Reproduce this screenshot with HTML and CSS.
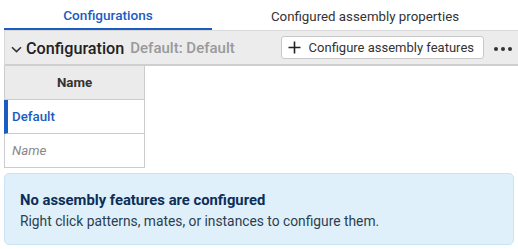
FILE: index.html
```html
<!DOCTYPE html>
<html>
<head>
<meta charset="utf-8">
<link rel="stylesheet" href="styles.css">
</head>
<body>
<div class="page">
  <div class="tabs">
    <div class="tab active">Configurations</div>
    <div class="tab other">Configured assembly properties</div>
  </div>
  <div class="header">
    <svg class="chev" width="11" height="7" viewBox="0 0 11 7"><path d="M1 1.2 L5.5 5.6 L10 1.2" fill="none" stroke="#333" stroke-width="1.6"/></svg>
    <span class="title">Configuration</span>
    <span class="sub">Default: Default</span>
    <span class="spacer"></span>
    <button class="btn"><svg width="13" height="13" viewBox="0 0 13 13"><path d="M6.5 0.5 V12.5 M0.5 6.5 H12.5" stroke="#222" stroke-width="1.6"/></svg><span>Configure assembly features</span></button>
    <span class="more"><i></i><i></i><i></i></span>
  </div>
  <div class="table">
    <div class="cell head">Name</div>
    <div class="cell sel">Default</div>
    <div class="cell placeholder">Name</div>
  </div>
  <div class="info">
    <div class="info-title">No assembly features are configured</div>
    <div class="info-text">Right click patterns, mates, or instances to configure them.</div>
  </div>
</div>
</body>
</html>
```
FILE: styles.css
```css
html, body { margin: 0; padding: 0; background: #fff; }
body { font-family: Roboto, "Noto Sans", sans-serif; }
.page { padding-left: 4px; width: 514px; }
.tabs { display: flex; height: 30px; }
.tab { display: flex; align-items: center; justify-content: center; box-sizing: border-box; padding-top: 2px; }
.tab.active { width: 208px; color: #1a5cc0; font-size: 13.6px; font-weight: 500; border-bottom: 2px solid #1a5cc0; }
.tab.other { flex: 1; color: #333; font-size: 13.3px; }
.header { display: flex; align-items: center; background: #ececec; border-top: 1px solid #d9d9d9; border-left: 1px solid #d9d9d9; border-bottom: 2px solid #cfcfcf; box-sizing: border-box; height: 36px; padding-left: 6px; padding-top: 1px; }
.chev { margin-right: 4px; margin-top: 3px; }
.title { font-size: 16.2px; color: #222; font-weight: 500; }
.sub { font-size: 15px; color: #999; font-weight: 500; margin-left: 6px; }
.spacer { flex: 1; }
.btn { display: flex; align-items: center; gap: 8px; height: 23px; padding: 0 9px 0 6px; margin-top: -1px; background: #fff; border: 1px solid #c8c8c8; border-radius: 3px; font-family: inherit; font-size: 13px; color: #333; }
.more { display: flex; gap: 3px; margin: 0 6px 0 10px; padding-top: 2px; }
.more i { width: 4px; height: 4px; border-radius: 50%; background: #333; display: block; }
.table { width: 141px; border-left: 1px solid #ccc; border-right: 1px solid #ccc; box-sizing: border-box; }
.cell { height: 34px; border-bottom: 1px solid #ccc; box-sizing: border-box; display: flex; align-items: center; padding-left: 8px; font-size: 13.3px; }
.cell.head { background: #ebebeb; justify-content: center; padding-left: 0; font-weight: 700; color: #333; }
.cell.sel { color: #1a5cc0; font-weight: 500; border-left: 4px solid #1a5cc0; padding-left: 4px; margin-left: -1px; }
.cell.placeholder { color: #888; font-style: italic; padding-left: 7px; }
.info { margin-top: 5px; margin-right: 4px; height: 72px; box-sizing: border-box; background: #dff0fa; border: 1px solid #c9e4f5; border-radius: 5px; padding: 17px 0 0 15px; }
.info-title { font-size: 14.8px; font-weight: 700; color: #0c2e57; }
.info-text { font-size: 13.8px; color: #2c3e50; margin-top: 4px; }
```
